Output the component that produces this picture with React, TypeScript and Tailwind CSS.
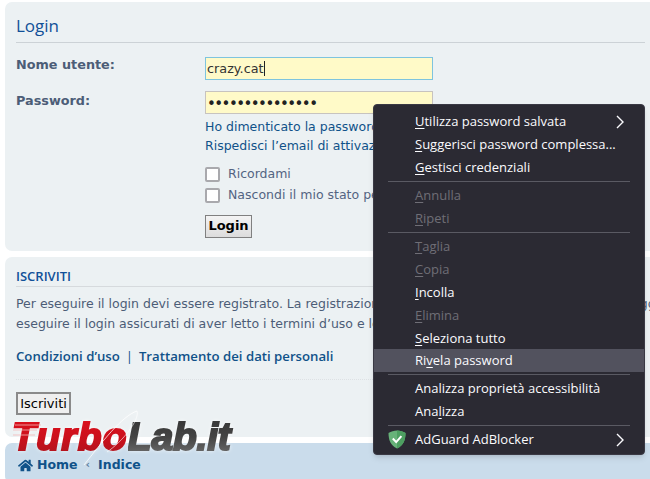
import { FaHome } from 'react-icons/fa';

interface MenuItem {
  before: string;
  accel: string;
  after: string;
  disabled?: boolean;
  hover?: boolean;
  arrow?: boolean;
  shield?: boolean;
}

const groups: MenuItem[][] = [
  [
    { before: '', accel: 'U', after: 'tilizza password salvata', arrow: true },
    { before: '', accel: 'S', after: 'uggerisci password complessa...' },
    { before: '', accel: 'G', after: 'estisci credenziali' },
  ],
  [
    { before: '', accel: 'A', after: 'nnulla', disabled: true },
    { before: '', accel: 'R', after: 'ipeti', disabled: true },
  ],
  [
    { before: '', accel: 'T', after: 'aglia', disabled: true },
    { before: '', accel: 'C', after: 'opia', disabled: true },
    { before: '', accel: 'I', after: 'ncolla' },
    { before: '', accel: 'E', after: 'limina', disabled: true },
    { before: '', accel: 'S', after: 'eleziona tutto' },
    { before: 'Ri', accel: 'v', after: 'ela password', hover: true },
  ],
  [
    { before: 'Analizza proprietà accessibilità', accel: '', after: '' },
    { before: 'Ana', accel: 'l', after: 'izza' },
  ],
  [{ before: 'AdGuard AdBlocker', accel: '', after: '', arrow: true, shield: true }],
];

function Chevron() {
  return (
    <svg width="8" height="14" viewBox="0 0 8 14" fill="none" className="absolute right-[20px] top-[5px]">
      <path d="M1 1l6 6-6 6" stroke="#fbfbfe" strokeWidth="1.4" />
    </svg>
  );
}

function Shield() {
  return (
    <svg width="18" height="19" viewBox="0 0 18 19" className="absolute left-[14px] top-[2px]">
      <path d="M9 0.5C6 0.5 3 1.5 0.5 3c0 7 2 12.500 8.500 15.500C15.500 15.500 17.500 10 17.500 3 15 1.500 12 0.500 9 0.500z" fill="#67b279" />
      <path d="M9 0.500C12 0.500 15 1.500 17.500 3c0 7-2 12.500-8.500 15.500z" fill="#4d9f61" />
      <path d="M4.800 8.500l3.400 3.600 5.200-6" stroke="#fff" strokeWidth="2" fill="none" />
    </svg>
  );
}

function ContextMenu() {
  return (
    <div className="absolute left-[373px] top-[104px] w-[272px] rounded-[4px] border border-[#3a3944] bg-[#2b2a33] pt-[5px] pb-[3px] font-['Open_Sans',sans-serif] text-[13px] text-[#fbfbfe] shadow-md">
      {groups.map((group, i) => (
        <div key={i}>
          {i > 0 && <div className="mx-[14px] my-[2px] h-px bg-[#5a5a63]" />}
          {group.map((item, j) => (
            <div
              key={j}
              className={`relative h-[23px] pl-[41px] leading-[23px] whitespace-nowrap ${item.hover ? 'mt-[-1px] bg-[#52525e]' : ''} ${item.disabled ? 'text-[#6f6e76]' : ''}`}
            >
              {item.shield && <Shield />}
              {item.before}
              {item.accel && <u className="underline-offset-2">{item.accel}</u>}
              {item.after}
              {item.arrow && <Chevron />}
            </div>
          ))}
        </div>
      ))}
    </div>
  );
}

function Logo() {
  return (
    <div className="absolute top-[408px] left-[10px] h-[60px] w-[230px] [filter:drop-shadow(0_0_2px_rgba(255,255,255,0.7))]">
      <div className="mt-[6px] ml-[2px] flex font-['Liberation_Sans',sans-serif] text-[39px] leading-[46px] font-bold italic">
        <span className="mr-[-6px] bg-gradient-to-b from-[#e0101c] via-[#cc101c] to-[#a8141e] bg-clip-text pr-[6px] tracking-[1.2px] text-transparent [-webkit-text-stroke:2px_transparent]">Turbo</span>
        <span className="bg-gradient-to-b from-[#333333] via-[#444444] to-[#787878] bg-clip-text pr-[6px] tracking-[-0.2px] text-transparent [-webkit-text-stroke:2px_transparent]">Lab.it</span>
      </div>
      <svg width="140" height="62" viewBox="0 0 140 62" fill="none" className="absolute top-0 left-0">
        <path d="M5 17h26M3 22h24M3 27h22" stroke="#f3b7b7" strokeWidth="1" opacity="0.8" />
        <path d="M127 3C112 8 92 34 74 57" stroke="#ffffff" strokeWidth="1" opacity="0.75" />
        <path d="M127 3C130 12 112 34 97 44" stroke="#ffffff" strokeWidth="1" opacity="0.6" />
      </svg>
    </div>
  );
}

export default function App() {
  return (
    <div className="relative h-[479px] w-[650px] overflow-hidden bg-white font-['DejaVu_Sans',sans-serif] text-[12.500px] text-[#536482]">
      <div className="flex flex-col gap-[6px] pt-[2px] pl-[5px]">
        <section className="h-[249px] w-[660px] rounded-[7px] bg-[#ecf1f3] pt-[13px] pr-[20px] pl-[11px]">
          <h2 className="h-[28px] border-b border-[#ccd2d6] font-['Open_Sans',sans-serif] text-[17px] leading-[21px] text-[#115098]">Login</h2>
          <div className="mt-[14px] flex">
            <div className="w-[189px] shrink-0 text-[12.800px] font-bold">
              <div className="mt-[-1px] h-[36px] leading-[17px] text-[#4c5d77]">Nome utente:</div>
              <div className="leading-[17px] text-[#4c5d77]">Password:</div>
            </div>
            <div>
              <div className="flex h-[23px] w-[228px] items-center border border-[#7ec4de] bg-[#fffac8] pl-[1px] text-[12.800px] text-[#333]">
                crazy.cat<span className="h-[15px] w-px bg-[#222]" />
              </div>
              <div className="mt-[11px] flex h-[23px] w-[228px] items-center border border-[#c7c3bf] bg-[#fffac8] pt-[3px] pl-[1px] text-[15px] tracking-[-1.55px] text-[#222]">
                •••••••••••••••
              </div>
              <div className="mt-[3px] whitespace-nowrap text-[#105289]">
                <div className="h-[19px] leading-[19px]">Ho dimenticato la password</div>
                <div className="h-[19px] leading-[19px]">Rispedisci l’email di attivazione</div>
              </div>
              <div className="mt-[10px] flex items-center gap-[8px] whitespace-nowrap text-[#536482]">
                <span className="h-[15px] w-[15px] rounded-[2px] border-2 border-[#a9a9ad] bg-white" />
                Ricordami
              </div>
              <div className="mt-[2px] flex items-center gap-[8px] whitespace-nowrap text-[#536482]">
                <span className="h-[15px] w-[15px] rounded-[2px] border-2 border-[#a9a9ad] bg-white" />
                Nascondi il mio stato per questa sessione
              </div>
              <button className="mt-[10px] h-[23px] w-[47px] border border-[#808080] bg-gradient-to-b from-[#f4f4f4] to-[#dcdcdc] text-[13px] font-bold text-black">Login</button>
            </div>
          </div>
        </section>
        <section className="h-[180px] w-[660px] rounded-[7px] bg-[#ecf1f3] pt-[11px] pr-[20px] pl-[11px]">
          <h3 className="h-[19px] border-b border-[#d6dadd] font-['Open_Sans',sans-serif] text-[13px] leading-[16px] font-semibold text-[#115098]">ISCRIVITI</h3>
          <div className="mt-[7px] whitespace-nowrap leading-[20px] text-[#4c5d77]">
            <div>Per eseguire il login devi essere registrato. La registrazione richiede solo pochi secondi ma ti dà maggiori possibilità.</div>
            <div>eseguire il login assicurati di aver letto i termini d’uso e le regole del forum.</div>
          </div>
          <div className="mt-[12px] font-['Open_Sans',sans-serif] text-[13.200px] leading-[20px] font-semibold text-[#105289]">
            Condizioni d’uso <span className="mx-[2.500px] font-normal">|</span> Trattamento dei dati personali
          </div>
          <div className="mt-[13px] border-t border-dotted border-[#dde1e4]" />
          <button className="mt-[12px] h-[23px] w-[55px] border-2 border-[#8a8a8a] bg-[#efefef] text-[13px] text-black">Iscriviti</button>
        </section>
        <nav className="flex h-[40px] w-[660px] items-center rounded-[7px] bg-[#cadceb] pt-[4px] pl-[13px] text-[12.500px] font-bold text-[#105289]">
          <FaHome className="mr-[4px] text-[15px]" />
          Home
          <span className="mx-[8px] text-[11px] text-[#5a7ea0]">‹</span>
          Indice
        </nav>
      </div>
      <Logo />
      <ContextMenu />
    </div>
  );
}
